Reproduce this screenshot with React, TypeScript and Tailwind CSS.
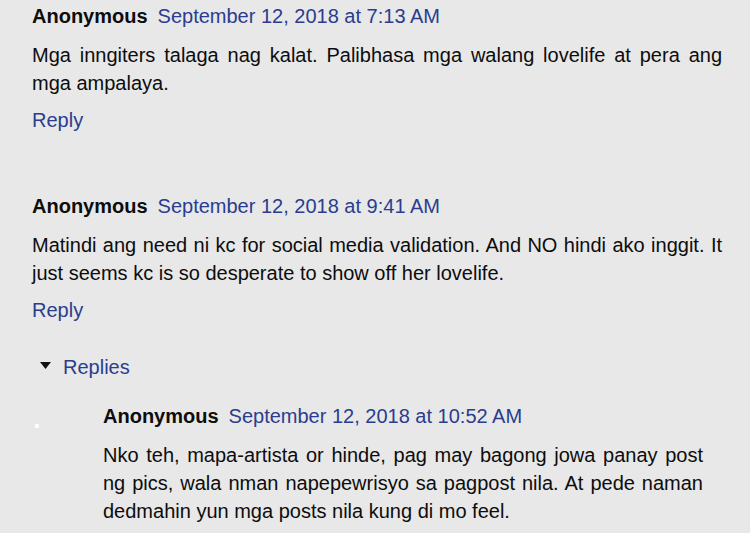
import React from "react";

const LINK = "text-[#2a3d8f]";

function Header({ date }: { date: string }) {
  return (
    <div className="h-[28px] whitespace-nowrap">
      <span className="font-bold text-[#0d0d0d]">Anonymous</span>
      <span className={`${LINK} ml-[10px]`}>{date}</span>
    </div>
  );
}

function Body({ lines, width }: { lines: string[]; width: string }) {
  return (
    <div className={`mt-[11px] ${width} text-[#0d0d0d]`}>
      {lines.map((l, i) => (
        <div
          key={i}
          className={
            i < lines.length - 1
              ? "h-[28px] whitespace-nowrap text-justify [text-align-last:justify]"
              : "h-[28px] whitespace-nowrap"
          }
        >
          {l}
        </div>
      ))}
    </div>
  );
}

function Reply() {
  return <div className={`mt-[9px] h-[28px] ${LINK}`}>Reply</div>;
}

export default function App() {
  return (
    <div
      className="w-[750px] h-[533px] overflow-hidden bg-[#e8e8e8] pl-[32px] pt-[2px] text-[20px] leading-[28px]"
      style={{ fontFamily: '"Liberation Sans", Arial, sans-serif' }}
    >
      <Header date="September 12, 2018 at 7:13 AM" />
      <Body
        width="w-[690px]"
        lines={[
          "Mga inngiters talaga nag kalat. Palibhasa mga walang lovelife at pera ang",
          "mga ampalaya.",
        ]}
      />
      <Reply />

      <div className="mt-[58px]">
        <Header date="September 12, 2018 at 9:41 AM" />
        <Body
          width="w-[690px]"
          lines={[
            "Matindi ang need ni kc for social media validation. And NO hindi ako inggit. It",
            "just seems kc is so desperate to show off her lovelife.",
          ]}
        />
        <Reply />
      </div>

      <div className="mt-[29px] h-[28px] flex items-center">
        <svg width="11" height="7" viewBox="0 0 11 7" className="ml-[8px] mr-[12px] -mt-[3px]">
          <polygon points="0,0 11,0 5.5,7" fill="#111" />
        </svg>
        <span className={LINK}>Replies</span>
      </div>

      <div className="mt-[21px] flex">
        <div className="w-[71px] shrink-0">
          <div className="ml-[3px] mt-[22px] w-[4px] h-[4px] rounded-[1px] bg-white" />
        </div>
        <div>
          <Header date="September 12, 2018 at 10:52 AM" />
          <Body
            width="w-[600px]"
            lines={[
              "Nko teh, mapa-artista or hinde, pag may bagong jowa panay post",
              "ng pics, wala nman napepewrisyo sa pagpost nila. At pede naman",
              "dedmahin yun mga posts nila kung di mo feel.",
            ]}
          />
        </div>
      </div>
    </div>
  );
}
